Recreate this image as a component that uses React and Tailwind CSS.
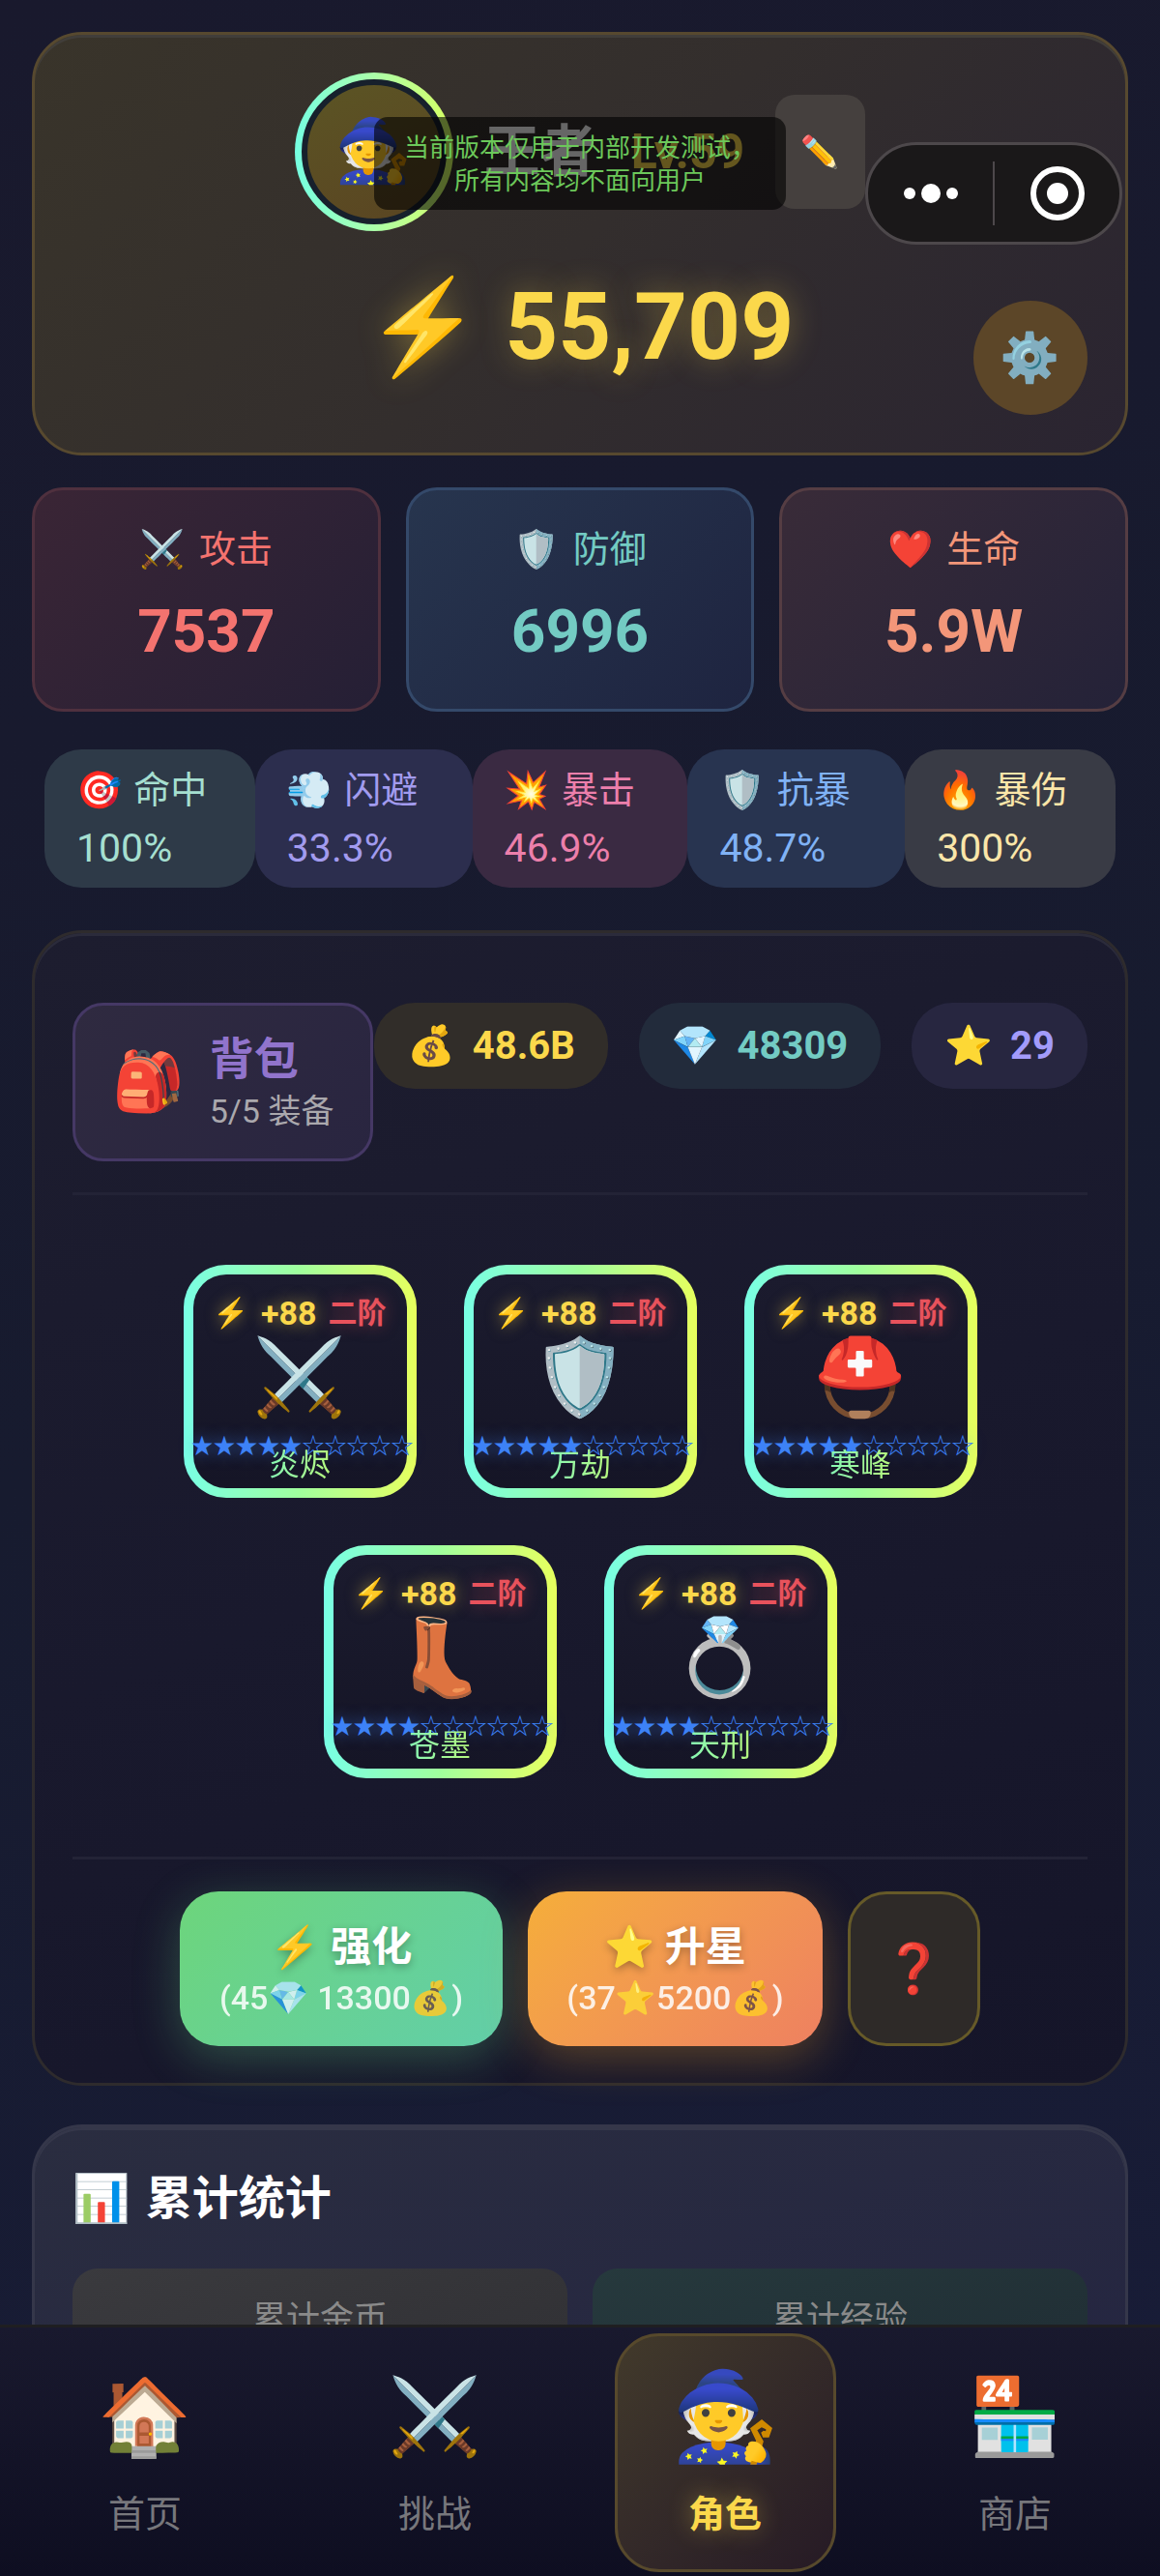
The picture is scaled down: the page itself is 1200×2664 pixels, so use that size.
import React from 'react';
import clsx from 'clsx';

const mainStats = [
  { icon: '⚔️', label: '攻击', value: '7537', box: 'border-[#4f303e] from-[#3a2535] to-[#251f35]', text: 'text-[#f4736f]' },
  { icon: '🛡️', label: '防御', value: '6996', box: 'border-[#34496a] from-[#27354e] to-[#1e2440]', text: 'text-[#73cbc3]' },
  { icon: '❤️', label: '生命', value: '5.9W', box: 'border-[#553d43] from-[#392b38] to-[#242238]', text: 'text-[#f39679]' },
];

const subStats = [
  { icon: '🎯', label: '命中', value: '100%', style: 'bg-[#2e3a48] text-[#a5dfd0]' },
  { icon: '💨', label: '闪避', value: '33.3%', style: 'bg-[#2c2e4e] text-[#a29bef]' },
  { icon: '💥', label: '暴击', value: '46.9%', style: 'bg-[#3a2a42] text-[#ec7fab]' },
  { icon: '🛡️', label: '抗暴', value: '48.7%', style: 'bg-[#283450] text-[#80b2f5]' },
  { icon: '🔥', label: '暴伤', value: '300%', style: 'bg-[#393b45] text-[#fbe6a9]' },
];

const currencies = [
  { icon: '💰', value: '48.6B', style: 'bg-[#312d29] text-[#fbd84b]' },
  { icon: '💎', value: '48309', style: 'bg-[#222b3b] text-[#73cbc3]' },
  { icon: '⭐', value: '29', style: 'bg-[#272640] text-[#a29bfa]' },
];

const gear = [
  { icon: '⚔️', name: '炎烬', stars: 5 },
  { icon: '🛡️', name: '万劫', stars: 5 },
  { icon: '⛑️', name: '寒峰', stars: 5 },
  { icon: '👢', name: '苍墨', stars: 4 },
  { icon: '💍', name: '天刑', stars: 4 },
];

const tabs = [
  { icon: '🏠', label: '首页' },
  { icon: '⚔️', label: '挑战' },
  { icon: '🧙', label: '角色', active: true },
  { icon: '🏪', label: '商店' },
];

const Capsule = () => (
  <div className="absolute top-[147px] right-[39px] flex h-[106px] w-[266px] items-center rounded-full border-[3px] border-[#4d484b] bg-[#1a1819]">
    <button aria-label="更多" className="flex h-full flex-1 items-center justify-center">
      <svg width="58" height="20" viewBox="0 0 58 20" fill="#fff">
        <circle cx="7" cy="10" r="6" />
        <circle cx="29" cy="10" r="10" />
        <circle cx="51" cy="10" r="6" />
      </svg>
    </button>
    <span className="h-[66px] w-[2px] bg-[#4d484b]" />
    <button aria-label="关闭" className="flex h-full flex-1 items-center justify-center">
      <svg width="56" height="56" viewBox="0 0 56 56">
        <circle cx="28" cy="28" r="25" fill="none" stroke="#fff" strokeWidth="6" />
        <circle cx="28" cy="28" r="11" fill="#fff" />
      </svg>
    </button>
  </div>
);

const Header = () => (
  <header className="rounded-[52px] border-[3px] border-[#57492f] bg-linear-135 from-[#39342a] via-[#332e2d] to-[#2a2431] p-[39px] shadow-[inset_0_3px_0_#413e3a]">
    <div className="flex items-center justify-center gap-8">
      <div className="size-[164px] shrink-0 rounded-full bg-linear-90 from-[#74ffe0] to-[#d6ff5c] p-[7px]">
        <div className="flex size-full items-center justify-center rounded-full border-[6px] border-[#17202c] bg-linear-160 from-[#5b5424] to-[#5a4522] text-[64px]">
          🧙
        </div>
      </div>
      <h1 className="flex items-center gap-9 font-bold">
        <span className="text-[58px] text-white">王者</span>
        <span className="text-[50px] text-[#fbd84b]">Lv.59</span>
      </h1>
      <button aria-label="编辑" className="h-[118px] w-[93px] rounded-[20px] bg-[#45403e] text-[32px]">✏️</button>
    </div>
    <div className="mt-[30px] grid h-[160px] grid-cols-[1fr_auto_1fr]">
      <p className="col-start-2 text-[96px] leading-[138px] font-bold text-[#fbd84b] [text-shadow:0_0_32px_rgba(251,216,75,0.35)]">⚡ 55,709</p>
      <button aria-label="设置" className="size-[118px] self-end justify-self-end rounded-full bg-[#5c4628] text-[50px]">⚙️</button>
    </div>
  </header>
);

const GearCard = ({ item }) => (
  <button className="relative size-[241px] rounded-[44px] bg-linear-90 from-[#78ffe4] via-[#a0ff9c] to-[#e6ff5c] p-[10px]">
    <span className="flex size-full flex-col items-center rounded-[34px] bg-linear-to-b from-[#1b1b2e] to-[#151526] pt-[20px]">
      <span className="flex items-center gap-3 leading-[40px] font-bold whitespace-nowrap text-[#fbd84b] [text-shadow:0_0_16px_rgba(251,216,75,0.5)]">
        <span className="text-[30px]">⚡</span>
        <span className="text-[34px]">+88</span>
        <span className="text-[30px] text-[#e8525c] [text-shadow:0_0_16px_rgba(232,82,92,0.5)]">二阶</span>
      </span>
      <span className="text-[78px] leading-[94px]">{item.icon}</span>
    </span>
    {/* Stars overlap the name and run onto the frame */}
    <span className="absolute top-[174px] left-[8px] text-[23px] leading-[28px] whitespace-nowrap text-[#3d82f7] [text-shadow:0_0_16px_rgba(61,130,247,0.6)]">
      {'★'.repeat(item.stars)}
      {'☆'.repeat(10 - item.stars)}
    </span>
    <span className="absolute inset-x-0 bottom-[14px] mx-auto w-fit bg-linear-90 from-[#86f7b4] to-[#b4f77c] bg-clip-text text-[32px] leading-[40px] text-transparent">
      {item.name}
    </span>
  </button>
);

const App = () => {
  return (
    <div className="flex h-screen flex-col overflow-hidden bg-linear-160 from-[#19192d] via-[#171b2f] to-[#181c38] font-[Roboto,'Noto_Sans_CJK_SC','Noto_Color_Emoji',sans-serif]">
      <main className="relative min-h-0 flex-1 overflow-y-auto px-[33px] pt-[33px] [scrollbar-width:none]">
        <Header />

        <section className="mt-[33px] grid grid-cols-3 gap-[26px]">
          {mainStats.map((stat) => (
            <div key={stat.label} className={clsx('h-[232px] rounded-[32px] border-[3px] bg-linear-135 pt-[33px] text-center', stat.box, stat.text)}>
              <p className="flex justify-center gap-[14px] text-[38px] leading-[56px]">
                <span>{stat.icon}</span>
                <span>{stat.label}</span>
              </p>
              <p className="mt-[12px] text-[62px] leading-[90px] font-bold">{stat.value}</p>
            </div>
          ))}
        </section>

        <section className="mx-[13px] mt-[39px] grid grid-cols-[218fr_225fr_223fr_225fr_218fr]">
          {subStats.map((stat) => (
            <div key={stat.label} className={clsx('h-[143px] rounded-[38px] pt-[12px] pl-[33px] leading-[60px] whitespace-nowrap', stat.style)}>
              <p className="flex gap-[12px] text-[38px]">
                <span>{stat.icon}</span>
                <span>{stat.label}</span>
              </p>
              <p className="text-[41px]">{stat.value}</p>
            </div>
          ))}
        </section>

        {/* Backpack + gear */}
        <section className="mt-[44px] rounded-[52px] border-[3px] border-[#2e2b2d] bg-linear-160 from-[#1d1d2f] via-[#19192d] to-[#151529] px-[39px] pt-[72px] pb-[38px] shadow-[inset_0_3px_0_#2b2b3b]">
          <div className="flex items-start justify-between border-b-[3px] border-[#232336] pb-[32px]">
            <button className="flex h-[164px] w-[311px] items-center gap-[26px] rounded-[32px] border-[3px] border-[#453865] bg-linear-135 from-[#2f2a40] to-[#292540] pl-[38px] text-left">
              <span className="text-[60px]">🎒</span>
              <span>
                <span className="block text-[46px] leading-[60px] font-bold text-[#9174cc]">背包</span>
                <span className="block text-[34px] leading-[48px] text-[#aaa8ad]">5/5 装备</span>
              </span>
            </button>
            <div className="flex gap-8">
              {currencies.map((c) => (
                <span key={c.icon} className={clsx('flex h-[89px] items-center gap-[18px] rounded-[42px] px-[34px] font-bold whitespace-nowrap', c.style)}>
                  <span className="text-[40px]">{c.icon}</span>
                  <span className="text-[40px]">{c.value}</span>
                </span>
              ))}
            </div>
          </div>

          <div className="mx-auto mt-[72px] flex max-w-[840px] flex-wrap justify-center gap-[49px]">
            {gear.map((item) => <GearCard key={item.name} item={item} />)}
          </div>

          <div className="mt-[81px] flex justify-center gap-[26px] border-t-[3px] border-[#232336] pt-[33px]">
            <button className="h-[160px] w-[334px] rounded-[40px] bg-linear-135 from-[#6dd57b] to-[#62cea8] pt-1 text-white shadow-[0_12px_48px_rgba(100,210,130,0.3)]">
              <span className="block text-[42px] leading-[56px] font-bold [text-shadow:0_3px_8px_rgba(0,0,0,0.3)]">⚡ 强化</span>
              <span className="block text-[34px] leading-[48px] font-medium opacity-85">(45💎 13300💰)</span>
            </button>
            <button className="h-[160px] w-[305px] rounded-[40px] bg-linear-135 from-[#f5ae39] to-[#ee8060] pt-1 text-white shadow-[0_12px_48px_rgba(245,165,40,0.3)]">
              <span className="block text-[42px] leading-[56px] font-bold [text-shadow:0_3px_8px_rgba(0,0,0,0.3)]">⭐ 升星</span>
              <span className="block text-[34px] leading-[48px] font-medium opacity-85">(37⭐5200💰)</span>
            </button>
            <button aria-label="帮助" className="h-[160px] w-[137px] rounded-[40px] border-[3px] border-[#665a28] bg-[#2e2a28] text-[50px]">❓</button>
          </div>
        </section>

        <section className="mt-[40px] rounded-t-[52px] border-[3px] border-[#35374a] bg-linear-160 from-[#2a2d40] to-[#242541] px-[39px] pt-[42px] pb-[39px] shadow-[inset_0_3px_0_#35374a]">
          <h2 className="flex gap-4 text-[48px] leading-[64px] font-bold text-white">
            <span>📊</span>
            <span>累计统计</span>
          </h2>
          <div className="mt-[40px] grid grid-cols-2 gap-[26px] text-center text-[35px] leading-[50px] text-[#8a8a8a]">
            <div className="h-[150px] rounded-[26px] bg-linear-160 from-[#3a3a3e] to-[#2f2f33] pt-[28px]">累计金币</div>
            <div className="h-[150px] rounded-[26px] bg-linear-160 from-[#26393d] to-[#1f2c33] pt-[28px]">累计经验</div>
          </div>
        </section>

        {/* Mini program capsule and test notice */}
        <Capsule />
        <p className="absolute top-[121px] left-1/2 w-[426px] -translate-x-1/2 rounded-[14px] bg-black/60 pt-[15px] pb-[13px] text-center text-[26px] leading-[34px] text-[#6cc85a]">
          当前版本仅用于内部开发测试，
          <br />
          所有内容均不面向用户
        </p>
      </main>

      <nav className="grid h-[260px] shrink-0 grid-cols-4 border-t-[3px] border-[#1f1f21] bg-linear-to-b from-[#19192e] to-[#0e0e21]">
        {tabs.map((tab) => (
          <a
            key={tab.label}
            href="#"
            className={clsx(
              'mx-auto mt-[6px] flex h-[247px] w-[229px] flex-col items-center rounded-[46px] border-[3px]',
              tab.active ? 'border-[#57492c] bg-linear-135 from-[#423a2b] to-[#261a25]' : 'border-transparent'
            )}
          >
            <span className={clsx('mt-[24px] leading-[120px]', tab.active ? 'text-[90px]' : 'text-[78px]')}>{tab.icon}</span>
            <span
              className={clsx(
                'mt-[12px] text-[38px] leading-[56px]',
                tab.active ? 'font-bold text-[#fbd84b] [text-shadow:0_0_24px_rgba(251,216,75,0.4)]' : 'text-[#77777c]'
              )}
            >
              {tab.label}
            </span>
          </a>
        ))}
      </nav>
    </div>
  );
};

export default App;
